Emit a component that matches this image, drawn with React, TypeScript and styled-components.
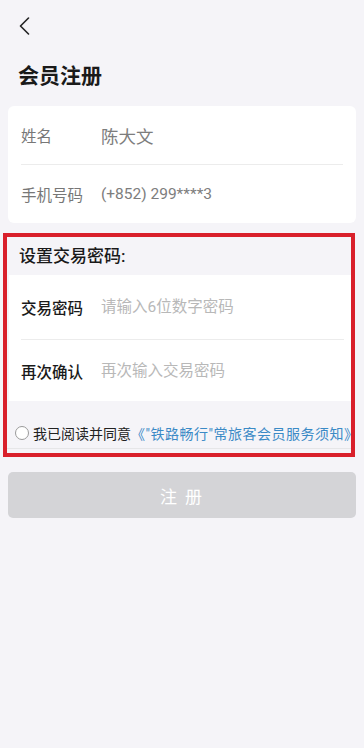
import React, { useState } from 'react';
import styled, { createGlobalStyle } from 'styled-components';

const GlobalStyle = createGlobalStyle`
  html, body {
    margin: 0;
    padding: 0;
    background: #f5f4f8;
  }
  body {
    font-family: Roboto, "Noto Sans CJK SC", sans-serif;
    color: #1a1a1a;
  }
  * {
    box-sizing: border-box;
  }
`;

function BackIcon() {
  return (
    <svg width="11" height="18" viewBox="0 0 11 18" fill="none">
      <path
        d="M9.5 1L1.5 9L9.5 17"
        stroke="#222"
        strokeWidth="1.6"
        strokeLinecap="round"
        strokeLinejoin="round"
      />
    </svg>
  );
}

function App() {
  const [agreed, setAgreed] = useState(false);

  return (
    <Page>
      <GlobalStyle />
      <Header>
        <BackButton type="button" aria-label="返回">
          <BackIcon />
        </BackButton>
      </Header>
      <Title>会员注册</Title>

      <Card>
        <Row $height={58}>
          <Label>姓名</Label>
          <Value $large>陈大文</Value>
        </Row>
        <Row $height={59}>
          <Label>手机号码</Label>
          <Value>(+852) 299****3</Value>
        </Row>
      </Card>

      <Highlight>
        <SectionTitle>设置交易密码:</SectionTitle>
        <InnerCard>
          <Row $height={64}>
            <Label $strong>交易密码</Label>
            <Field type="password" placeholder="请输入6位数字密码" />
          </Row>
          <Row $height={62}>
            <Label $strong>再次确认</Label>
            <Field type="password" placeholder="再次输入交易密码" />
          </Row>
        </InnerCard>
        <Agreement>
          <Radio
            type="button"
            $checked={agreed}
            onClick={() => setAgreed(!agreed)}
            aria-label="同意"
          />
          <span>我已阅读并同意</span>
          <Link>《"铁路畅行"常旅客会员服务须知》</Link>
        </Agreement>
      </Highlight>

      <SubmitButton type="button" disabled={!agreed}>
        注 册
      </SubmitButton>
    </Page>
  );
}

export default App;

const Page = styled.main`
  width: 364px;
  min-height: 748px;
  background: #f5f4f8;
  padding-bottom: 40px;
`;

const Header = styled.header`
  height: 50px;
  padding: 17px 0 0 19px;
`;

const BackButton = styled.button`
  border: none;
  background: none;
  padding: 0;
  cursor: pointer;
  display: block;
`;

const Title = styled.h1`
  margin: 0;
  padding: 12px 0 0 18px;
  height: 56px;
  font-size: 21px;
  line-height: 28px;
  font-weight: 700;
  color: #1a1a1a;
`;

const Card = styled.section`
  margin: 0 8px;
  background: #fff;
  border-radius: 6px;
  padding: 0 13px;
`;

const Row = styled.div<{ $height: number }>`
  display: flex;
  align-items: center;
  height: ${(p) => p.$height}px;
  & + & {
    border-top: 1px solid #ececec;
  }
`;

const Label = styled.span<{ $strong?: boolean }>`
  width: 80px;
  flex-shrink: 0;
  font-size: 15.5px;
  color: ${(p) => (p.$strong ? '#1a1a1a' : '#777')};
  font-weight: ${(p) => (p.$strong ? 500 : 400)};
`;

const Value = styled.span<{ $large?: boolean }>`
  font-size: ${(p) => (p.$large ? '17.5px' : '15.5px')};
  color: #7d7d7d;
`;

const Field = styled.input`
  flex: 1;
  border: none;
  outline: none;
  padding: 0;
  background: transparent;
  font-family: inherit;
  font-size: 15.5px;
  color: #333;
  &::placeholder {
    color: #b8b8b8;
  }
`;

const Highlight = styled.section`
  margin: 10px 9px 0 3px;
  padding-bottom: 4px;
  border: 4px solid #d9202b;
`;

const SectionTitle = styled.h2`
  margin: 0;
  height: 38px;
  padding: 4px 0 0 12px;
  font-size: 17px;
  line-height: 30px;
  font-weight: 500;
  color: #1a1a1a;
`;

const InnerCard = styled.div`
  margin-left: 2px;
  background: #fff;
  padding: 0 0 0 12px;
  & > div {
    margin-right: 7px;
  }
`;

const Agreement = styled.div`
  display: flex;
  align-items: center;
  height: 48px;
  padding: 16px 0 0 8px;
  border-bottom: 1px solid #e6e6e8;
  white-space: nowrap;
  font-size: 14px;
  color: #222;
`;

const Radio = styled.button<{ $checked: boolean }>`
  width: 14px;
  height: 14px;
  padding: 0;
  margin-right: 4px;
  border-radius: 50%;
  border: 1px solid #9a9a9a;
  background: ${(p) => (p.$checked ? '#3b8ac6' : '#fff')};
  cursor: pointer;
  flex-shrink: 0;
`;

const Link = styled.span`
  color: #3b8ac6;
  letter-spacing: 0.5px;
  cursor: pointer;
`;

const SubmitButton = styled.button`
  display: block;
  width: calc(100% - 16px);
  height: 46px;
  margin: 15px 8px 0;
  border: none;
  border-radius: 5px;
  background: #d4d4d7;
  color: #fff;
  font-family: inherit;
  font-size: 17px;
  letter-spacing: 2px;
  &:not(:disabled) {
    background: #3b8ac6;
    cursor: pointer;
  }
`;
